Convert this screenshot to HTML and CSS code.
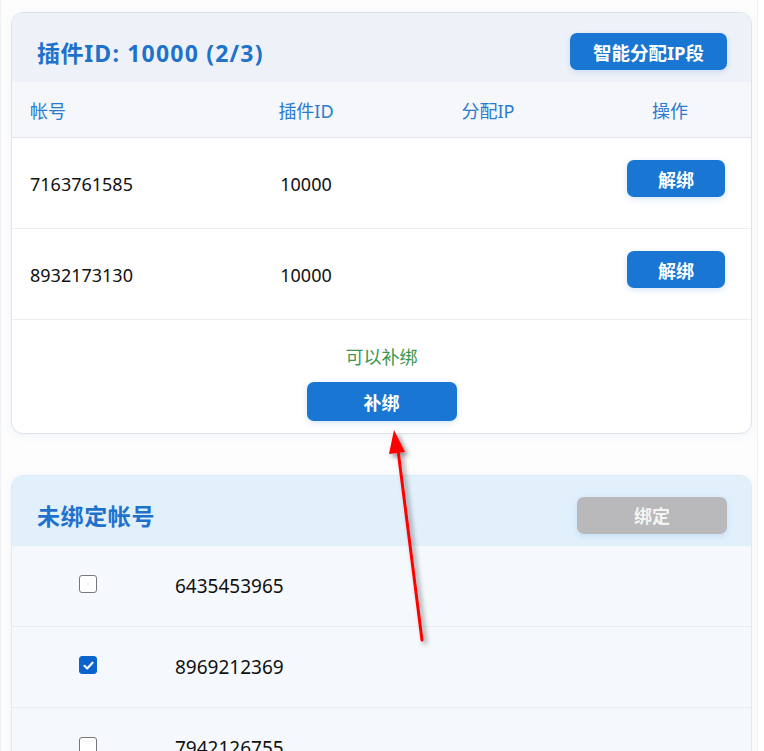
FILE: index.html
```html
<!DOCTYPE html>
<html lang="zh-CN">
<head>
<meta charset="utf-8">
<title>插件绑定</title>
<link rel="stylesheet" href="styles.css">
</head>
<body>
<div class="page">
  <section class="card">
    <div class="card-head">
      <h2 class="card-title">插件<span class="latin">ID: 10000 (2/3)</span></h2>
      <button class="btn btn-head">智能分配IP段</button>
    </div>
    <div class="grid-row thead">
      <div class="c1">帐号</div>
      <div class="c2">插件ID</div>
      <div class="c3">分配IP</div>
      <div class="c4">操作</div>
    </div>
    <div class="grid-row tbody">
      <div class="c1">7163761585</div>
      <div class="c2">10000</div>
      <div class="c3"></div>
      <div class="c4 act"><button class="btn btn-small">解绑</button></div>
    </div>
    <div class="grid-row tbody">
      <div class="c1">8932173130</div>
      <div class="c2">10000</div>
      <div class="c3"></div>
      <div class="c4 act"><button class="btn btn-small">解绑</button></div>
    </div>
    <div class="card-foot">
      <div class="hint">可以补绑</div>
      <button class="btn btn-wide">补绑</button>
    </div>
  </section>

  <section class="card card-blue">
    <div class="card-head head-blue">
      <h2 class="card-title">未绑定帐号</h2>
      <button class="btn btn-wide btn-disabled">绑定</button>
    </div>
    <div class="acc-row">
      <span class="chk"></span>
      <span class="acc">6435453965</span>
    </div>
    <div class="acc-row">
      <span class="chk checked"><svg viewBox="0 0 16 16" width="13" height="13"><path d="M3 8.4 L6.4 11.6 L13 4.6" fill="none" stroke="#fff" stroke-width="2.6" stroke-linecap="round" stroke-linejoin="round"/></svg></span>
      <span class="acc">8969212369</span>
    </div>
    <div class="acc-row">
      <span class="chk"></span>
      <span class="acc">7942126755</span>
    </div>
  </section>

  <svg class="arrow" width="764" height="751" viewBox="0 0 764 751">
    <defs>
      <filter id="sh" x="-50%" y="-50%" width="200%" height="200%">
        <feDropShadow dx="3" dy="3" stdDeviation="2.5" flood-color="#000" flood-opacity="0.45"/>
      </filter>
    </defs>
    <g filter="url(#sh)">
      <line x1="422" y1="640" x2="398" y2="450" stroke="#ff0000" stroke-width="3" stroke-linecap="round"/>
      <polygon points="394,430 389,454 405,452" fill="#ff0000"/>
    </g>
  </svg>
</div>
</body>
</html>
```

FILE: styles.css
```css
* { box-sizing: border-box; }

html, body {
  margin: 0;
  padding: 0;
  background: #ffffff;
}

body {
  font-family: "Noto Sans", "Noto Sans CJK SC", sans-serif;
  color: #111;
}

.page {
  position: relative;
  width: 758px;
  height: 751px;
  padding: 12px 5px 0 10px;
  border-left: 1px solid #eef1f5;
  border-right: 1px solid #eef1f5;
  background: #fdfdfe;
  overflow: hidden;
}

.card {
  width: 741px;
  background: #fff;
  border: 1px solid #dde3ec;
  border-radius: 12px;
  overflow: hidden;
  box-shadow: 0 2px 10px rgba(40, 80, 140, 0.06);
}

.card-blue {
  margin-top: 41px;
  background: #f5f9fe;
  border-color: #dbe9f8;
}

.card-head {
  height: 69px;
  background: #eef2f8;
  display: flex;
  align-items: center;
  justify-content: space-between;
  padding: 8px 24px 0 25px;
}

.head-blue {
  height: 70px;
  background: #e2f0fc;
}

.card-title {
  margin: 0;
  font-size: 23px;
  font-weight: 700;
  color: #1f72cc;
  letter-spacing: 0.6px;
}

.card-title .latin { letter-spacing: 1.2px; }

.btn {
  border: none;
  background: #1976d2;
  color: #fff;
  font-family: inherit;
  font-weight: 700;
  border-radius: 7px;
  box-shadow: 0 2px 6px rgba(25, 118, 210, 0.18);
  cursor: pointer;
  padding: 0;
}

.btn-head {
  width: 157px;
  height: 37px;
  font-size: 18.5px;
}

.btn-small {
  width: 98px;
  height: 37px;
  font-size: 18px;
}

.btn-wide {
  width: 150px;
  height: 39px;
  font-size: 18px;
}

.btn-disabled {
  height: 37px;
  background: #b9b9bb;
  color: #f4f4f4;
  box-shadow: 0 2px 6px rgba(25, 118, 210, 0.15);
}

.grid-row {
  display: grid;
  grid-template-columns: 185px 182px 182px 1fr;
  align-items: center;
  padding-left: 18px;
  font-size: 18px;
}

.thead {
  height: 56px;
  background: #f5f7fb;
  color: #2a7ad0;
  border-bottom: 1px solid #e2e6ec;
}

.tbody {
  height: 91px;
  padding-top: 2px;
  border-bottom: 1px solid #eceef1;
  color: #111;
}

.c2, .c3 { text-align: center; }
.c4 { text-align: center; padding-left: 10px; }

.act {
  text-align: right;
  padding-right: 26px;
}

.act .btn { margin-bottom: 11px; }

.card-foot {
  display: flex;
  flex-direction: column;
  align-items: center;
  padding: 23px 0 12px;
}

.hint {
  color: #3b9650;
  font-size: 18px;
  line-height: 28px;
  margin-bottom: 11px;
}

.acc-row {
  height: 81px;
  display: flex;
  align-items: center;
  border-bottom: 1px solid #e9edf1;
  font-size: 19px;
}

.chk {
  width: 18px;
  height: 18px;
  margin-left: 67px;
  margin-right: 78px;
  margin-bottom: 4px;
  border: 1.5px solid #777;
  border-radius: 3px;
  background: #fff;
  display: flex;
  align-items: center;
  justify-content: center;
}

.chk.checked {
  background: #0b63ce;
  border-color: #0b63ce;
}

.acc { color: #111; }

.arrow {
  position: absolute;
  left: -1px;
  top: 0;
  pointer-events: none;
}
```
